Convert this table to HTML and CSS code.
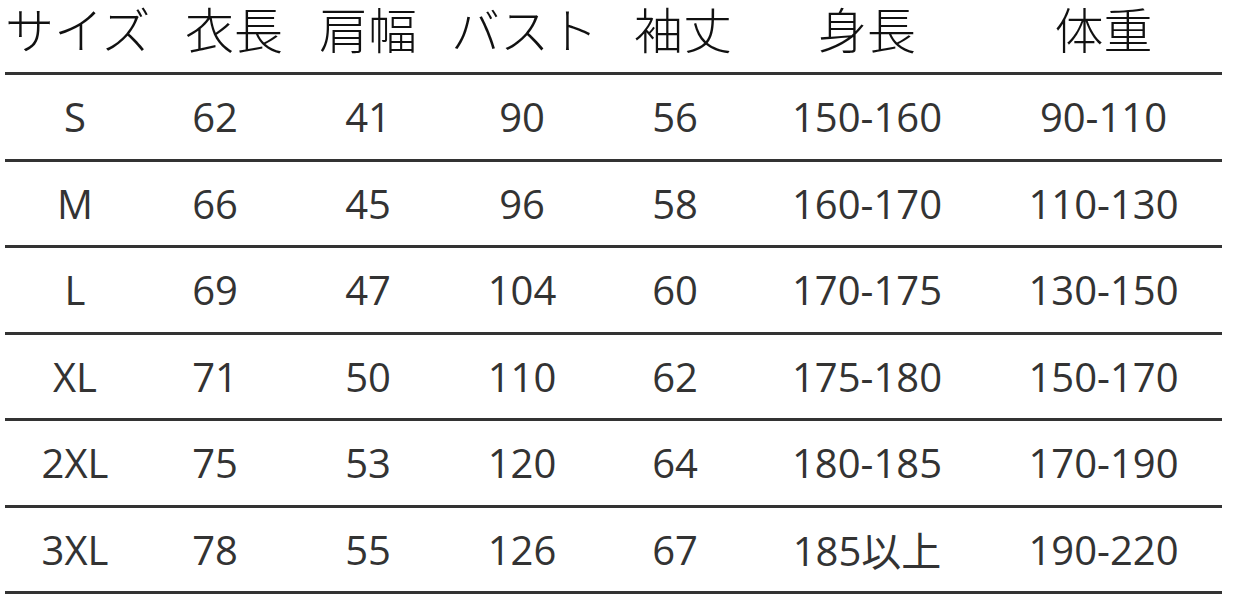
FILE: index.html
```html
<!DOCTYPE html>
<html lang="ja">
<head>
<meta charset="utf-8">
<title>サイズ表</title>
<link rel="stylesheet" href="styles.css">
</head>
<body>
<div class="chart">
  <div class="row head">
    <div class="cell">サイズ</div>
    <div class="cell shift-lg">衣長</div>
    <div class="cell">肩幅</div>
    <div class="cell">バスト</div>
    <div class="cell shift-sm">袖丈</div>
    <div class="cell">身長</div>
    <div class="cell">体重</div>
  </div>
  <div class="row">
    <div class="cell">S</div><div class="cell">62</div><div class="cell">41</div><div class="cell">90</div><div class="cell">56</div><div class="cell">150-160</div><div class="cell">90-110</div>
  </div>
  <div class="row">
    <div class="cell">M</div><div class="cell">66</div><div class="cell">45</div><div class="cell">96</div><div class="cell">58</div><div class="cell">160-170</div><div class="cell">110-130</div>
  </div>
  <div class="row">
    <div class="cell">L</div><div class="cell">69</div><div class="cell">47</div><div class="cell">104</div><div class="cell">60</div><div class="cell">170-175</div><div class="cell">130-150</div>
  </div>
  <div class="row">
    <div class="cell">XL</div><div class="cell">71</div><div class="cell">50</div><div class="cell">110</div><div class="cell">62</div><div class="cell">175-180</div><div class="cell">150-170</div>
  </div>
  <div class="row">
    <div class="cell">2XL</div><div class="cell">75</div><div class="cell">53</div><div class="cell">120</div><div class="cell">64</div><div class="cell">180-185</div><div class="cell">170-190</div>
  </div>
  <div class="row">
    <div class="cell">3XL</div><div class="cell">78</div><div class="cell">55</div><div class="cell">126</div><div class="cell">67</div><div class="cell">185以上</div><div class="cell">190-220</div>
  </div>
</div>
</body>
</html>
```
FILE: styles.css
```css
html, body {
  margin: 0;
  padding: 0;
  background: #ffffff;
}

.chart {
  margin-left: 5px;
  width: 1217px;
  display: flex;
  flex-direction: column;
}

.row {
  display: grid;
  grid-template-columns: 140px 140px 166px 142px 164px 220px 245px;
  height: 83.5px;
  align-items: center;
  border-bottom: 3px solid #333333;
  font-family: "Open Sans", "Noto Sans CJK JP", sans-serif;
  font-size: 40px;
  color: #333333;
}

.row .cell {
  text-align: center;
  white-space: nowrap;
}

.row > .cell:last-child {
  padding-left: 8px;
}

.head {
  height: 72px;
  align-items: start;
  font-family: "Noto Sans CJK JP", sans-serif;
  font-weight: 300;
  font-size: 49px;
  color: #111111;
}

.head .cell {
  line-height: 56px;
  padding-top: 0;
}

.head .shift-lg {
  padding-left: 38px;
}

.head .shift-sm {
  padding-left: 16px;
}
```
